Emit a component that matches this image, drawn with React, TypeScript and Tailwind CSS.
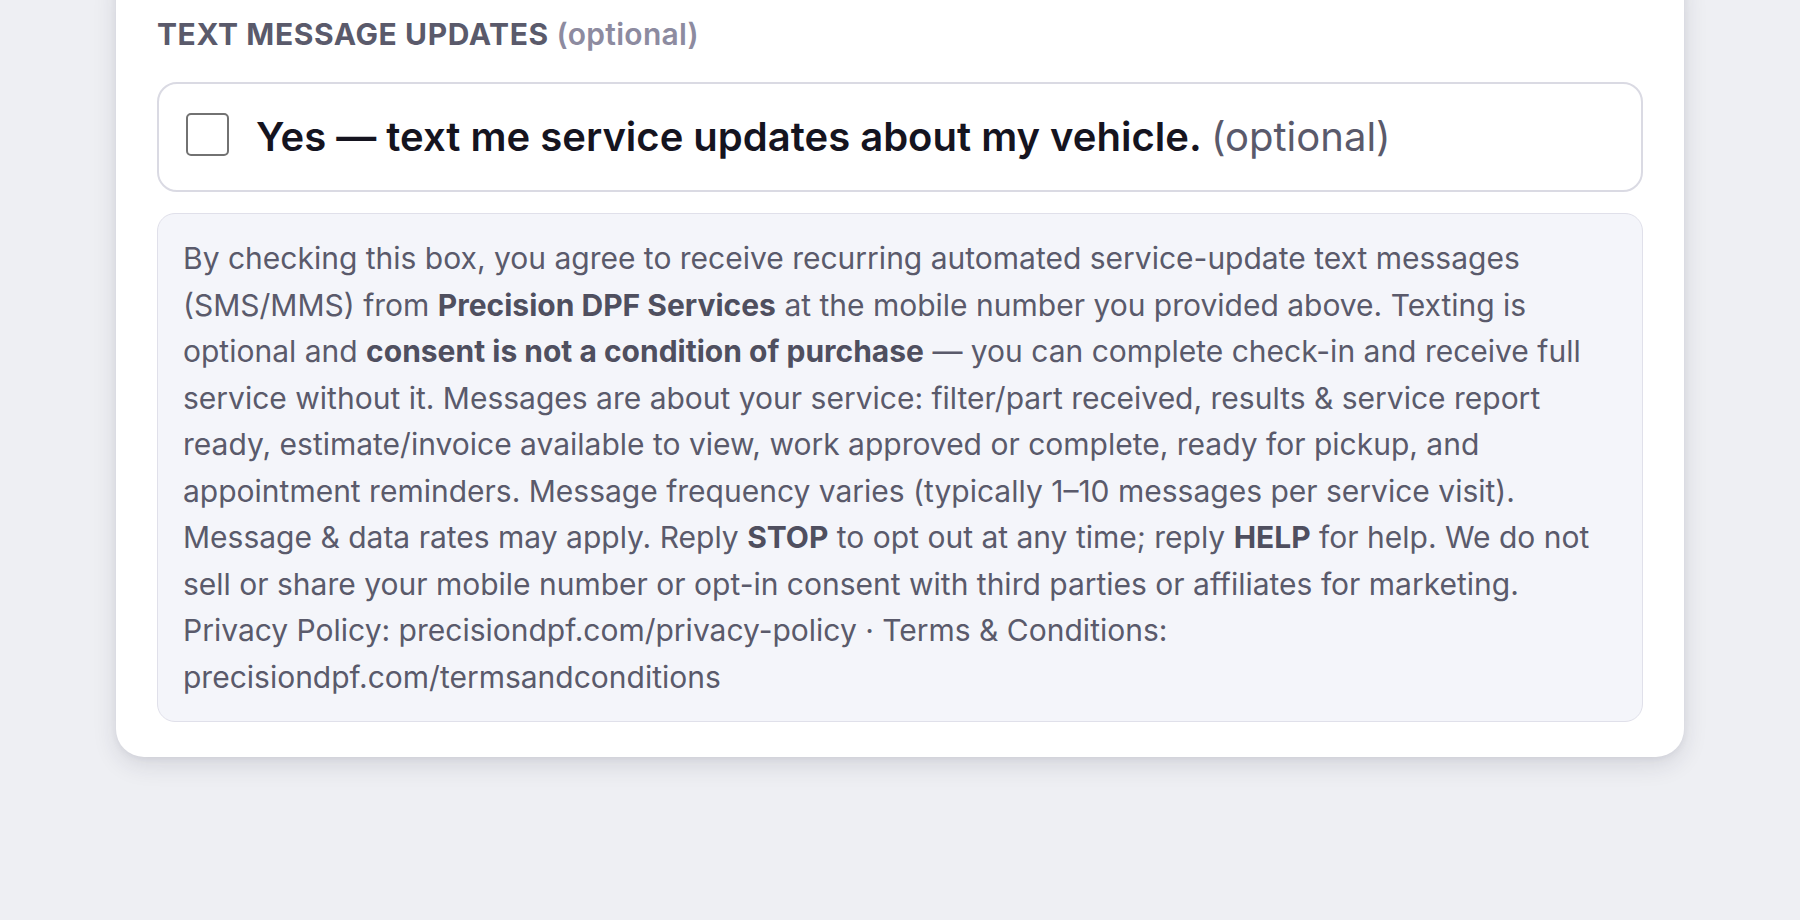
import React from "react";

export default function App() {
  return (
    <div className="min-h-screen w-full overflow-hidden bg-[#eeeff3] px-[116px] pb-[163px]" style={{ fontFamily: "Inter, 'Noto Sans', sans-serif" }}>
      <div className="-mt-[40px] rounded-[28px] bg-white px-[41px] pt-[56px] pb-[35px] shadow-[0_8px_24px_rgba(30,30,60,0.12),0_2px_6px_rgba(30,30,60,0.06)]">
        <div className="mb-[30px] text-[30px] leading-[36px] font-bold tracking-[0.02em] text-[#5a5a6b]">
          TEXT MESSAGE UPDATES <span className="font-semibold tracking-[0.01em] text-[#8d8ba0]">(optional)</span>
        </div>
        <label className="flex h-[110px] items-center gap-[27px] rounded-[20px] border-2 border-[#dadae3] bg-white pl-[27px]">
          <span className="mb-[5px] block h-[43px] w-[43px] shrink-0 rounded-[5px] border-2 border-[#727272] bg-white" />
          <span className="text-[40px] leading-[48px] font-semibold text-[#15141f]">
            Yes — text me service updates about my vehicle. <span className="font-normal text-[#5a5a6b]">(optional)</span>
          </span>
        </label>
        <div className="mt-[21px] rounded-[18px] border-[1.5px] border-[#e0e0ea] bg-[#f4f5fa] px-[25px] pt-[21px] pb-[21px] text-[30px] leading-[46.5px] text-[#5a5a6b]">
          By checking this box, you agree to receive recurring automated service-update text messages (SMS/MMS) from{" "}
          <b className="font-bold text-[#4f4f5f]">Precision DPF Services</b> at the mobile number you provided above. Texting is optional and{" "}
          <b className="font-bold text-[#4f4f5f]">consent is not a condition of purchase</b> — you can complete check-in and receive full service without it. Messages are about your service: filter/part received, results &amp; service report ready, estimate/invoice available to view, work approved or complete, ready for pickup, and appointment reminders. Message frequency varies (typically 1–10 messages per service visit). Message &amp; data rates may apply. Reply{" "}
          <b className="font-bold text-[#4f4f5f]">STOP</b> to opt out at any time; reply <b className="font-bold text-[#4f4f5f]">HELP</b> for help. We do not sell or share your mobile number or opt-in consent with third parties or affiliates for marketing. Privacy Policy: precisiondpf.com/privacy-policy · Terms &amp; Conditions: precisiondpf.com/termsandconditions
        </div>
      </div>
    </div>
  );
}
